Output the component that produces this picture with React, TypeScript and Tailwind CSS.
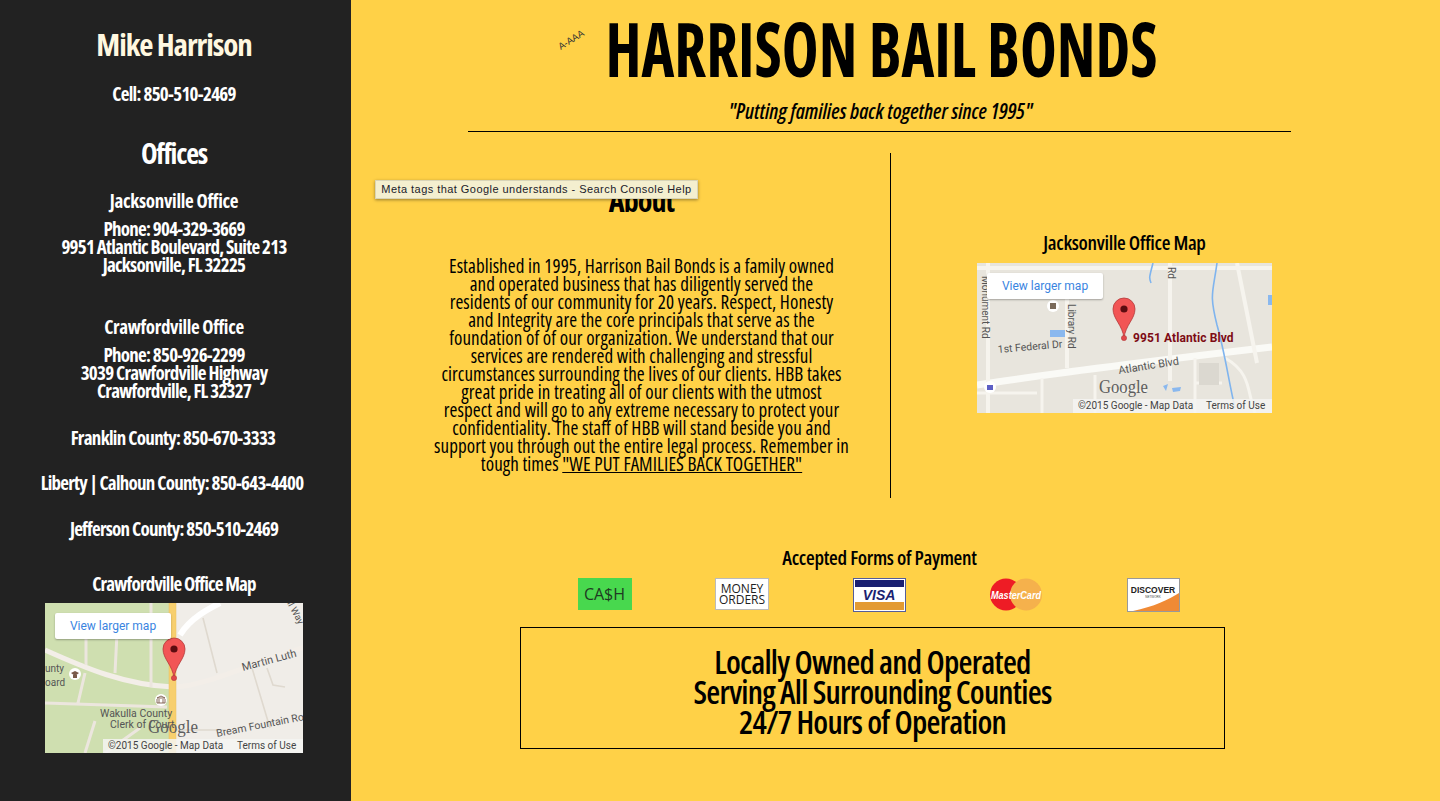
import React from "react";

function Pin({ x, y }: { x: number; y: number }) {
  return (
    <g transform={`translate(${x} ${y})`}>
      <path d="M0 0 C-1.5 -13 -11 -19 -11 -29 A11 11 0 1 1 11 -29 C11 -19 1.5 -13 0 0Z" fill="#f25555" stroke="#b23a3a" strokeWidth="0.8" />
      <circle cx="0" cy="-29" r="3.6" fill="#5c0c10" />
      <circle cx="0" cy="0" r="2.6" fill="#e2474a" stroke="#b23a3a" strokeWidth="0.6" />
    </g>
  );
}

function MapFooter({ w, h, copyX }: { w: number; h: number; copyX: number }) {
  return (
    <g fontFamily="Roboto, sans-serif" fontSize="10" fill="#444">
      <rect x={copyX} y={h - 14} width={w - copyX} height="14" fill="#f5f5f2" opacity="0.85" />
      <text x={copyX + 5} y={h - 4}>©2015 Google - Map Data</text>
      <text x={w - 66} y={h - 4}>Terms of Use</text>
    </g>
  );
}

function CrawfordvilleMap() {
  return (
    <div className="relative h-[150px] w-[258px] overflow-hidden font-stretch-normal">
      <svg width="258" height="150" viewBox="0 0 258 150" className="block">
        <rect width="258" height="150" fill="#f0ede8" />
        <rect width="125" height="150" fill="#cfdfb0" />
        <path d="M0 47 C40 65 80 82 128 84 C160 84 220 55 258 45" stroke="#f3eee8" strokeWidth="5" fill="none" />
        <path d="M106 0 V84 M72 30 L70 70 M41 30 L41 62 M40 70 L33 100 M0 100 L122 104" stroke="#ece6de" strokeWidth="3" fill="none" />
        <path d="M40 150 L50 118 M95 125 L60 150" stroke="#ece6de" strokeWidth="3" fill="none" />
        <path d="M135 32 C145 15 165 5 175 0" stroke="#fff" strokeWidth="6" fill="none" />
        <path d="M158 15 L172 70 M207 65 L225 125 M222 65 L228 82 L240 84" stroke="#dfd9cf" strokeWidth="1.6" fill="none" />
        <path d="M130 127 H180" stroke="#dfd9cf" strokeWidth="1.6" fill="none" />
        <rect x="124" y="0" width="7" height="150" fill="#f7cf6e" stroke="#e9c060" strokeWidth="0.5" />
        <circle cx="30" cy="71" r="6" fill="#fff" />
        <path d="M26 70 L30 68 L34 70 L30 73Z M28 72 H32 V75 H28Z" fill="#7a5a4a" />
        <circle cx="116" cy="97" r="6" fill="#fff" />
        <path d="M112 95 L116 93 L120 95Z M112 96 V100 H120 V96 M114 96 V100 M118 96 V100" stroke="#7a5a4a" strokeWidth="0.9" fill="none" />
        <g fontFamily="Roboto, sans-serif" fontSize="10" fill="#555">
          <text x="0" y="69">unty</text>
          <text x="0" y="83">oard</text>
          <text x="55" y="114" fontSize="10.5">Wakulla County</text>
          <text x="65" y="125" fontSize="10.5">Clerk of Court</text>
          <text x="198" y="68" transform="rotate(-15 198 68)" fontSize="11">Martin Luth</text>
          <text x="172" y="134" transform="rotate(-11 172 134)" fontSize="10.5">Bream Fountain Ro</text>
          <text x="242" y="0" transform="rotate(62 242 0)" fontSize="9.5">ll Way</text>
        </g>
        <text x="103" y="130" fontFamily="'Liberation Serif', serif" fontSize="19" fill="#5e5e5e" textLength="50" lengthAdjust="spacingAndGlyphs">Google</text>
        <Pin x={129} y={75} />
        <MapFooter w={258} h={150} copyX={58} />
      </svg>
      <span className="absolute left-[10px] top-[10px] flex h-[26px] w-[116px] items-center justify-center rounded-[2px] bg-white font-['Roboto',sans-serif] text-[12px] font-normal tracking-normal text-[#3a84df] shadow-[0_1px_2px_rgba(0,0,0,0.3)]">View larger map</span>
    </div>
  );
}

function JacksonvilleMap() {
  return (
    <div className="relative h-[150px] w-[295px] overflow-hidden font-stretch-normal">
      <svg width="295" height="150" viewBox="0 0 295 150" className="block">
        <rect width="295" height="150" fill="#e8e5dd" />
        <path d="M0 122 C90 108 200 95 295 84" stroke="#fafaf6" strokeWidth="7" fill="none" />
        <path d="M11 0 V150 M193 0 V118 M260 0 L280 100 M90 20 V105 M0 5 H295" stroke="#f6f4ee" strokeWidth="4" fill="none" />
        <path d="M0 130 H60 M65 115 V150 M118 112 V150 M130 128 H170 M218 95 V150 M218 120 H245 M248 95 C275 110 270 130 278 150" stroke="#f6f4ee" strokeWidth="3" fill="none" />
        <rect x="222" y="100" width="20" height="22" fill="#dbd8d0" />
        <path d="M176 0 C172 15 172 15 174 20 M240 0 C236 30 232 30 240 62 C248 90 252 120 258 145" stroke="#7fb4ee" strokeWidth="1.6" fill="none" />
        <rect x="291" y="32" width="4" height="10" fill="#8ab8ee" />
        <rect x="73" y="67" width="15" height="7" fill="#8ab8ee" />
        <path d="M186 123 L191 121 L189 128Z M195 125 L204 124 L203 128 L196 129Z" fill="#8ab8ee" />
        <circle cx="76" cy="43" r="6" fill="#fff" />
        <rect x="73" y="40" width="6" height="6" fill="#7a6a5a" />
        <circle cx="13" cy="124" r="6" fill="#fff" />
        <rect x="10" y="122" width="6" height="5" fill="#5d5fc4" />
        <g fontFamily="Roboto, sans-serif" fontSize="10" fill="#555">
          <text x="5" y="13" transform="rotate(90 5 13)">Monument Rd</text>
          <text x="91" y="41" transform="rotate(90 91 41)">Library Rd</text>
          <text x="191" y="4" transform="rotate(90 191 4)">Rd</text>
          <text x="21" y="90" transform="rotate(-5 21 90)" fontSize="10.5">1st Federal Dr</text>
          <text x="142" y="111" transform="rotate(-9 142 111)" fontSize="11">Atlantic Blvd</text>
        </g>
        <text x="122" y="130" fontFamily="'Liberation Serif', serif" fontSize="19" fill="#5e5e5e" textLength="49" lengthAdjust="spacingAndGlyphs">Google</text>
        <Pin x={147} y={75} />
        <text x="156" y="79" fontFamily="Roboto, sans-serif" fontSize="12" fontWeight="700" letterSpacing="0.1" fill="#7d0a14">9951 Atlantic Blvd</text>
        <MapFooter w={295} h={150} copyX={96} />
      </svg>
      <span className="absolute left-[10px] top-[10px] flex h-[26px] w-[116px] items-center justify-center rounded-[2px] bg-white font-['Roboto',sans-serif] text-[12px] font-normal text-[#3a84df] shadow-[0_1px_2px_rgba(0,0,0,0.3)]">View larger map</span>
    </div>
  );
}

function PayCards() {
  return (
    <div className="mr-[2px] mt-[7px] flex w-[602px] items-start justify-between font-stretch-normal">
      <div className="flex h-[32px] w-[54px] items-center justify-center bg-[#48d84e] font-['Open_Sans',sans-serif] text-[16px] font-normal text-[#1f3a22]">CA$H</div>
      <div className="flex h-[32px] w-[54px] flex-col items-center justify-center border border-[#bbb] bg-white font-['Open_Sans',sans-serif] text-[12px] font-normal leading-[11px] text-[#222]"><span>MONEY</span><span>ORDERS</span></div>
      <div className="flex h-[34px] w-[53px] flex-col border border-[#555d99] bg-white p-[1px]">
        <div className="h-[7px] bg-[#1a1f71]" />
        <div className="flex flex-1 items-center justify-center font-['Liberation_Sans',sans-serif] text-[14px] font-bold italic leading-none text-[#1a1f71]">VISA</div>
        <div className="h-[8px] bg-[#e39a32]" />
      </div>
      <svg width="54" height="33" viewBox="0 0 54 33" className="block">
        <circle cx="17" cy="16.5" r="16" fill="#ee1c25" />
        <circle cx="37" cy="16.5" r="16" fill="#f5b14c" />
        <text x="27" y="21" textAnchor="middle" fontFamily="'Liberation Sans', sans-serif" fontSize="11" fontWeight="700" fontStyle="italic" fill="#fff" textLength="50" lengthAdjust="spacingAndGlyphs">MasterCard</text>
      </svg>
      <div className="relative h-[34px] w-[53px] overflow-hidden border border-[#999] bg-white">
        <svg width="51" height="32" viewBox="0 0 51 32" className="absolute left-0 top-0">
          <path d="M5 32 C25 28 42 20 51 14 V32Z" fill="#f08a35" />
        </svg>
        <div className="absolute left-0 right-0 top-[6px] text-center font-['Liberation_Sans',sans-serif] text-[8.5px] font-bold leading-[10px] text-[#222]">DISCOVER</div>
        <div className="absolute left-0 right-0 top-[16px] text-center font-['Liberation_Sans',sans-serif] text-[3px] leading-[4px] text-[#444]">NETWORK</div>
      </div>
    </div>
  );
}

const body = [
  "Established in 1995, Harrison Bail Bonds is a family owned",
  "and operated business that has diligently served the",
  "residents of our community for 20 years. Respect, Honesty",
  "and Integrity are the core principals that serve as the",
  "foundation of of our organization. We understand that our",
  "services are rendered with challenging and stressful",
  "circumstances surrounding the lives of our clients. HBB takes",
  "great pride in treating all of our clients with the utmost",
  "respect and will go to any extreme necessary to protect your",
  "confidentiality. The staff of HBB will stand beside you and",
  "support you through out the entire legal process. Remember in",
];

export default function App() {
  return (
    <div className="flex h-[801px] w-[1440px] overflow-hidden bg-[#ffd147] font-['Open_Sans',sans-serif] font-stretch-condensed text-black">
      <aside className="flex h-[801px] w-[351px] shrink-0 flex-col items-center bg-[#222222] pr-[3px] text-center text-white">
        <h2 className="mt-[24px] text-[31px] font-bold leading-[40px] tracking-[-1.1px] text-[#fff8e0]">Mike Harrison</h2>
        <p className="mt-[18px] whitespace-nowrap text-[19px] font-bold leading-[24px] tracking-[-0.7px]">Cell: 850-510-2469</p>
        <h2 className="mt-[28px] text-[28px] font-bold leading-[38px] tracking-[-1.2px]">Offices</h2>
        <h3 className="mt-[17px] whitespace-nowrap text-[19px] font-bold leading-[24px] tracking-[-0.3px]">Jacksonville Office</h3>
        <p className="mt-[7px] whitespace-nowrap text-[19px] font-bold leading-[18px] tracking-[-0.75px]">Phone: 904-329-3669<br />9951 Atlantic Boulevard, Suite 213<br />Jacksonville, FL 32225</p>
        <h3 className="mt-[41px] whitespace-nowrap text-[19px] font-bold leading-[24px] tracking-[-0.35px]">Crawfordville Office</h3>
        <p className="mt-[7px] whitespace-nowrap text-[19px] font-bold leading-[18px] tracking-[-0.75px]">Phone: 850-926-2299<br />3039 Crawfordville Highway<br />Crawfordville, FL 32327</p>
        <p className="mr-[2px] mt-[26px] whitespace-nowrap text-[19px] font-bold leading-[24px] tracking-[-0.7px]">Franklin County: 850-670-3333</p>
        <p className="mr-[4px] mt-[21px] whitespace-nowrap text-[19px] font-bold leading-[24px] tracking-[-0.75px]">Liberty | Calhoun County: 850-643-4400</p>
        <p className="mt-[22px] whitespace-nowrap text-[19px] font-bold leading-[24px] tracking-[-0.75px]">Jefferson County: 850-510-2469</p>
        <h3 className="mt-[31px] whitespace-nowrap text-[19px] font-bold leading-[24px] tracking-[-0.8px]">Crawfordville Office Map</h3>
        <div className="mt-[7px]"><CrawfordvilleMap /></div>
      </aside>
      <main className="relative flex min-w-0 flex-1 flex-col items-center">
        <header className="relative mr-[32px] flex h-[132px] w-[823px] flex-col items-center border-b border-black">
          <span className="absolute left-[89px] top-[33px] -rotate-[32deg] font-['Liberation_Sans',sans-serif] text-[9.5px] font-normal text-[#333] font-stretch-normal">A-AAA</span>
          <h1 className="ml-[4px] mt-[10px] origin-center scale-x-[0.83] whitespace-nowrap text-[75px] font-bold leading-[76px]">HARRISON BAIL BONDS</h1>
          <p className="ml-[2px] mt-[12px] whitespace-nowrap text-[21px] font-semibold italic leading-[26px]">"Putting families back together since 1995"</p>
        </header>
        <section className="mt-[21px] flex h-[345px] w-full">
          <div className="flex h-full w-[540px] flex-col items-center border-r border-black pl-[42px] pt-[28px] text-center">
            <h2 className="text-[30px] font-bold leading-[40px] tracking-[-0.9px]">About</h2>
            <p className="mt-[36px] whitespace-nowrap text-[19px] font-medium leading-[18px] tracking-[0.08px]">
              {body.map((l) => (<React.Fragment key={l}>{l}<br /></React.Fragment>))}
              tough times <a className="underline">"WE PUT FAMILIES BACK TOGETHER"</a>
            </p>
          </div>
          <div className="flex flex-1 flex-col items-center pr-[82px] pt-[77px]">
            <h3 className="whitespace-nowrap text-[20px] font-semibold leading-[26px] tracking-[-0.3px]">Jacksonville Office Map</h3>
            <div className="mt-[7px]"><JacksonvilleMap /></div>
          </div>
        </section>
        <section className="mr-[32px] mt-[47px] flex flex-col items-center">
          <h3 className="whitespace-nowrap text-[20px] font-semibold leading-[26px] tracking-[-0.3px]">Accepted Forms of Payment</h3>
          <PayCards />
        </section>
        <section className="mr-[46px] mt-[15px] flex h-[122px] w-[705px] flex-col items-center justify-center border border-black pt-[8px] text-[32px] font-semibold leading-[30px] tracking-[-0.75px]">
          <span>Locally Owned and Operated</span>
          <span>Serving All Surrounding Counties</span>
          <span>24/7 Hours of Operation</span>
        </section>
        <div className="absolute left-[24px] top-[180px] flex h-[19px] w-[323px] items-center justify-center whitespace-nowrap border border-[#d8d4b8] bg-[#f4efcf] font-['Liberation_Sans',sans-serif] text-[11px] font-normal tracking-[0.45px] text-[#1a1a2a] shadow-[0_1px_3px_rgba(0,0,0,0.4)] font-stretch-normal">Meta tags that Google understands - Search Console Help</div>
      </main>
    </div>
  );
}
